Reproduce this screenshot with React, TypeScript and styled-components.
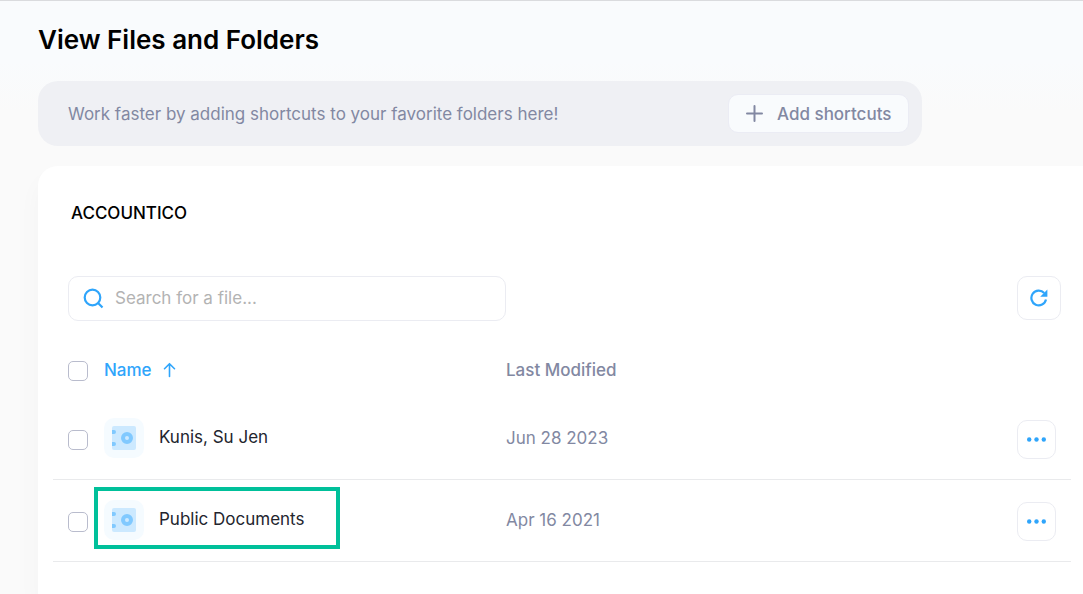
import React from 'react';
import styled, { createGlobalStyle, css } from 'styled-components';

const blue = '#2fa5fb';
const muted = '#8288a2';
const line = '#ebecf2';

const GlobalStyle = createGlobalStyle`
  * { box-sizing: border-box; }
  body {
    margin: 0;
    background: #fafafa;
    color: #23252e;
    font-family: Inter, "Liberation Sans", sans-serif;
    font-size: 17px;
    line-height: 24px;
  }
  button, input { font: inherit; }
`;

const Page = styled.main`
  display: flex;
  flex-direction: column;
  min-height: 100vh;
  padding-left: 38px;
  border-top: 1px solid #dadbde;
  background: linear-gradient(#f9fbfd 0, #f9fbfd 60px, #fafafa 110px);
`;

const Title = styled.h1`
  margin: 22px 0 25px;
  color: #000;
  font-size: 26px;
  line-height: 33px;
  font-weight: 600;
`;

const Banner = styled.section`
  display: flex;
  align-items: center;
  justify-content: space-between;
  min-height: 65px;
  margin-right: 161px;
  padding: 12px 13px 12px 30px;
  border-radius: 20px;
  background: #eff0f4;
  color: ${muted};
`;

const BannerText = styled.p`
  margin: 0;
`;

const ShortcutButton = styled.button`
  display: flex;
  align-items: center;
  gap: 13px;
  width: 181px;
  height: 39px;
  padding: 0 16px;
  border: 1px solid #ebecf4;
  border-radius: 10px;
  background: #f9fbfd;
  color: ${muted};
  font-weight: 500;
  white-space: nowrap;
`;

const Card = styled.section`
  flex: 1;
  margin-top: 20px;
  padding: 36px 12px 0 15px;
  border-top-left-radius: 20px;
  background: #fff;
  box-shadow: 0 14px 24px rgba(40, 44, 60, 0.03);
`;

const CompanyName = styled.h2`
  margin: 0 18px 52px;
  color: #000;
  font-size: 17px;
  line-height: 22px;
  font-weight: 500;
`;

const Toolbar = styled.div`
  display: flex;
  align-items: flex-start;
  justify-content: space-between;
  padding: 0 10px 0 15px;
`;

const SearchBox = styled.label`
  display: flex;
  align-items: center;
  gap: 11px;
  width: 438px;
  height: 45px;
  padding: 0 14px;
  border: 1px solid ${line};
  border-radius: 10px;
`;

const SearchInput = styled.input`
  flex: 1;
  min-width: 0;
  padding: 0 0 2px;
  border: 0;
  outline: 0;
  background: transparent;
  &::placeholder { color: #b3b3b3; opacity: 1; }
`;

const IconButton = styled.button<{ $size: number }>`
  display: flex;
  align-items: center;
  justify-content: center;
  width: ${p => p.$size}px;
  height: ${p => p.$size}px;
  padding: 0;
  border: 1px solid ${line};
  border-radius: 10px;
  background: #fff;
  color: ${blue};
`;

const Table = styled.table`
  width: 100%;
  margin-top: 21px;
  border-spacing: 0;
  table-layout: fixed;
`;

const Column = styled.col<{ $width?: number }>`
  ${p => p.$width && css`width: ${p.$width}px;`}
`;

const HeadCell = styled.th`
  height: 56px;
  padding: 0;
  color: ${muted};
  font-weight: 500;
  text-align: left;
`;

const Cell = styled.td`
  height: 82px;
  padding: 0 0 2px;
  border-bottom: 1px solid #e9eaec;
  color: ${muted};
`;

const ControlCell = styled(Cell)`
  padding: 2px 0 0;
`;

const Checkbox = styled.input`
  display: block;
  appearance: none;
  width: 20px;
  height: 20px;
  margin: 1px 0 0 15px;
  border: 1px solid #b9bccd;
  border-radius: 5px;
  background: #fff;
  &:checked { background: ${blue}; }
`;

const SortButton = styled.button`
  display: flex;
  align-items: center;
  gap: 10px;
  padding: 0;
  border: 0;
  background: none;
  color: ${blue};
  font-weight: 500;
`;

const FolderName = styled.div`
  position: relative;
  display: flex;
  width: fit-content;
  align-items: center;
  gap: 15px;
`;

const FolderLink = styled.a`
  padding-bottom: 2px;
  color: #23252e;
  text-decoration: none;
`;

const Highlight = styled.span`
  position: absolute;
  top: -13px;
  left: -10px;
  width: 246px;
  height: 62px;
  border: 4px solid #00c09a;
  pointer-events: none;
`;

const FolderTile = styled.span`
  display: flex;
  align-items: center;
  justify-content: center;
  width: 40px;
  height: 40px;
  border-radius: 10px;
  background: #f5fbff;
`;

const FolderIcon = () => (
  <FolderTile>
    <svg width="24" height="24" viewBox="0 0 24 24" aria-hidden="true">
      <rect width="24" height="24" rx="2" fill="#cce9ff" />
      <path d="M0 4h2a2 2 0 0 1 0 4H0zM0 16h2a2 2 0 0 1 0 4H0z" fill="#80c9ff" />
      <circle cx="15" cy="12" r="4" fill="none" stroke="#80c9ff" strokeWidth="4" />
    </svg>
  </FolderTile>
);

const PlusIcon = () => (
  <svg width="19" height="19" viewBox="0 0 19 19" fill="none" stroke="currentColor" strokeWidth="2" strokeLinecap="round" aria-hidden="true">
    <path d="M9.5 2v15M2 9.5h15" />
  </svg>
);

const SearchIcon = () => (
  <svg width="21" height="21" viewBox="0 0 21 21" fill="none" stroke={blue} strokeWidth="2.2" aria-hidden="true">
    <circle cx="9.5" cy="9.5" r="7.8" />
    <path d="M14.8 14.8l4.7 4.7" />
  </svg>
);

const ArrowUpIcon = () => (
  <svg width="15" height="16" viewBox="0 0 15 16" fill="none" stroke="currentColor" strokeWidth="1.6" strokeLinecap="round" strokeLinejoin="round" aria-hidden="true">
    <path d="M7.5 14.5V2M2.5 6.7l5-5 5 5" />
  </svg>
);

const RefreshIcon = () => (
  <svg width="18" height="18" viewBox="0 0 18 18" aria-hidden="true">
    <path d="M14.2 3.9A7.4 7.4 0 1 0 16 10.6" fill="none" stroke="currentColor" strokeWidth="2.2" />
    <path d="M17.4 0.6v7.2h-7.2z" fill="currentColor" />
  </svg>
);

const MoreIcon = () => (
  <svg width="19" height="5" viewBox="0 0 19 5" fill="currentColor" aria-hidden="true">
    <circle cx="2.2" cy="2.5" r="2.2" />
    <circle cx="9.5" cy="2.5" r="2.2" />
    <circle cx="16.8" cy="2.5" r="2.2" />
  </svg>
);

const folders = [
  { name: 'Kunis, Su Jen', modified: 'Jun 28 2023', highlighted: false },
  { name: 'Public Documents', modified: 'Apr 16 2021', highlighted: true },
];

export default function App() {
  return (
    <>
      <GlobalStyle />
      <Page>
        <Title>View Files and Folders</Title>
        <Banner>
          <BannerText>Work faster by adding shortcuts to your favorite folders here!</BannerText>
          <ShortcutButton type="button"><PlusIcon />Add shortcuts</ShortcutButton>
        </Banner>
        <Card>
          <CompanyName>ACCOUNTICO</CompanyName>
          <Toolbar>
            <SearchBox>
              <SearchIcon />
              <SearchInput type="text" placeholder="Search for a file..." aria-label="Search for a file" />
            </SearchBox>
            <IconButton type="button" $size={44} aria-label="Refresh"><RefreshIcon /></IconButton>
          </Toolbar>
          <Table>
            <colgroup>
              <Column $width={51} />
              <Column $width={402} />
              <Column />
              <Column $width={54} />
            </colgroup>
            <thead>
              <tr>
                <HeadCell><Checkbox type="checkbox" aria-label="Select all" /></HeadCell>
                <HeadCell><SortButton type="button">Name<ArrowUpIcon /></SortButton></HeadCell>
                <HeadCell>Last Modified</HeadCell>
                <HeadCell />
              </tr>
            </thead>
            <tbody>
              {folders.map(folder => (
                <tr key={folder.name}>
                  <ControlCell><Checkbox type="checkbox" aria-label={`Select ${folder.name}`} /></ControlCell>
                  <Cell>
                    <FolderName>
                      <FolderIcon />
                      <FolderLink href="#">{folder.name}</FolderLink>
                      {folder.highlighted && <Highlight />}
                    </FolderName>
                  </Cell>
                  <Cell>{folder.modified}</Cell>
                  <ControlCell>
                    <IconButton type="button" $size={39} aria-label={`Actions for ${folder.name}`}><MoreIcon /></IconButton>
                  </ControlCell>
                </tr>
              ))}
            </tbody>
          </Table>
        </Card>
      </Page>
    </>
  );
}
